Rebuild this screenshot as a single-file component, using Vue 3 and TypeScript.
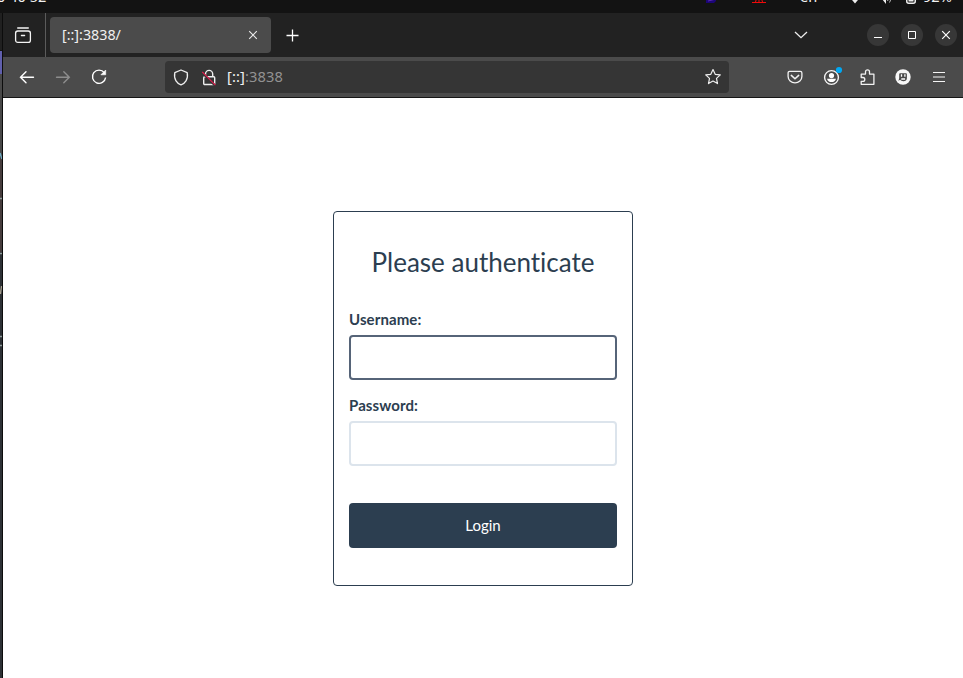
<script setup lang="ts">
import { ref } from 'vue'

const host = '[::]'
const port = ':3838'
const username = ref('')
const password = ref('')
</script>

<template>
  <div class="desktop">
    <header class="system">
      <div class="system-row">
        <span class="clock">0 40 52</span>
        <svg class="tray-app" width="12" height="32" viewBox="0 0 12 32"><path d="M1 8h10v12l-2 2H1z" fill="#1c0578" /><path d="M3 20l8-2" stroke="#5b2bb0" /></svg>
        <svg class="tray-red" width="14" height="32" viewBox="0 0 14 32" fill="none" stroke="#f00a0a"><path d="M0 21.500h14M3.500 21l1.500-5M7 15v6M10.500 21L9 16" /></svg>
        <span class="lang">en</span>
        <svg class="wifi" width="16" height="32" viewBox="0 0 16 32" fill="#eee"><path d="M0 13c4-5 12-5 16 0l-8 9.500z" /></svg>
        <svg class="volume" width="16" height="32" viewBox="0 0 16 32"><path d="M0 14h3l4-4v13l-4-5H0z" fill="#eee" /><path d="M8.500 20c1.500-2 1.500-5 0-7M10.500 21.500c2-4 2-7 0-10" stroke="#bbb" fill="none" /></svg>
        <svg class="battery" width="10" height="32" viewBox="0 0 10 32"><rect x=".75" y="9.750" width="8.500" height="12.500" rx="2" fill="none" stroke="#eee" stroke-width="1.500" /><path d="M2.500 13h5v7.500h-5z" fill="#eee" /></svg>
        <span class="charge">92%</span>
      </div>
    </header>
    <div class="workspace">
      <aside class="behind">
        <svg width="2" height="665" viewBox="0 0 2 665">
          <path d="M0 0h2v37H0z" fill="#202020" />
          <path d="M0 38h2v23H0z" fill="#605fad" />
          <path d="M0 61h2v81H0z" fill="#484848" />
          <path d="M0 142h2v97H0z" fill="#463c3c" />
          <path d="M0 239h2v426H0z" fill="#2d3135" />
          <path d="M0 140l2 6" stroke="#6ca6bc" stroke-width="1.500" />
          <path d="M0 185.500h2M0 240.500h2M0 323.500h2M0 332.500h2" stroke="#8f9c9b" stroke-width="1.500" />
          <path d="M.5 281l1-8" stroke="#a8a190" stroke-width="1.300" />
        </svg>
      </aside>
      <div class="browser">
        <div class="tabs">
          <div class="view"><svg width="18" height="18" viewBox="0 0 18 18" fill="none" stroke="#f4f4f4" stroke-width="1.300" stroke-linecap="round"><path d="M3.700 1h10.600" /><rect x="1.600" y="4" width="14.800" height="11.400" rx="2.200" /><path d="M7.400 8.500h3.200" /></svg></div>
          <div class="tab">
            <span>{{ host }}{{ port }}/</span>
            <svg width="10" height="10" viewBox="0 0 10 10" stroke="#ececec" stroke-width="1.100"><path d="M1.200 1.200l7.600 7.600M8.800 1.200L1.200 8.800" /></svg>
          </div>
          <svg class="plus" width="13" height="13" viewBox="0 0 13 13" stroke="#fff" stroke-width="1.300"><path d="M6.500.500v12M.500 6.500h12" /></svg>
          <svg class="chevron" width="14" height="8" viewBox="0 0 14 8" fill="none" stroke="#eee" stroke-width="1.300"><path d="M1 1l6 5.700L13 1" /></svg>
          <div class="window-buttons">
            <button aria-label="Minimize"><svg width="10" height="10" viewBox="0 0 10 10"><path d="M1 7.500h8" stroke="#fff" /></svg></button>
            <button aria-label="Maximize"><svg width="10" height="10" viewBox="0 0 10 10"><path d="M1.500 1.500h7v7h-7z" fill="none" stroke="#fff" /></svg></button>
            <button aria-label="Close"><svg width="10" height="10" viewBox="0 0 10 10"><path d="M1.200 1.200l7.600 7.600M8.800 1.200L1.200 8.800" stroke="#fff" stroke-width="1.200" /></svg></button>
          </div>
        </div>
        <div class="toolbar">
          <nav>
            <svg width="16" height="16" viewBox="0 0 16 16" fill="none" stroke="#fff" stroke-width="1.400" stroke-linecap="round"><path d="M14.500 8.200H1.500M7 2.700L1.500 8.200 7 13.700" /></svg>
            <svg width="16" height="16" viewBox="0 0 16 16" fill="none" stroke="#8d8d8d" stroke-width="1.400" stroke-linecap="round"><path d="M1.500 8.200h12.800M8.800 2.700l5.500 5.500-5.500 5.500" /></svg>
            <svg width="16" height="16" viewBox="0 0 16 16" fill="none" stroke="#fff" stroke-width="1.400"><path d="M13.300 3.700A6.600 6.600 0 1 0 14.600 8.500" /><path d="M14.700 1v4.800H9.900z" fill="#fff" stroke-width=".6" /></svg>
          </nav>
          <div class="address">
            <svg class="shield" width="16" height="17" viewBox="0 0 16 17" fill="none" stroke="#eee" stroke-width="1.300" stroke-linejoin="round"><path d="M8 1L14.200 3.600c.600 3.100.100 6.200-1.200 8.300-1.200 2-2.900 3.200-5 4-2.100-.8-3.800-2-5-4C1.700 9.800 1.200 6.700 1.800 3.600z" /></svg>
            <svg class="lock" width="16" height="17" viewBox="0 0 16 17" fill="none" stroke-width="1.400"><path d="M4.500 7.500V5a3.600 3.600 0 0 1 7.200 0v2.500M3.700 7.700h9a1 1 0 0 1 1 1v5.800a1 1 0 0 1-1 1h-9a1 1 0 0 1-1-1V8.700a1 1 0 0 1 1-1z" stroke="#eee" /><path d="M.7 3.300l13 13" stroke="#353535" stroke-width="2.200" /><path d="M1.200 2.800l13.200 13.300" stroke="#e21b4d" stroke-width="1.200" /></svg>
            <span class="url">{{ host }}<i>{{ port }}</i></span>
            <svg class="star" width="18" height="18" viewBox="0 0 18 18" fill="none" stroke="#eee" stroke-width="1.200" stroke-linejoin="round"><path d="M9 1.600l2.200 4.700 5.100.6-3.800 3.500 1 5.200L9 13.100l-4.500 2.500 1-5.200L1.700 6.900l5.100-.6z" /></svg>
          </div>
          <div class="actions">
            <svg width="18" height="18" viewBox="0 0 18 18" fill="none" stroke="#f2f2f2" stroke-width="1.300"><path d="M3.700 3.300h10.600c1 0 1.600.6 1.600 1.600v3.600a6.900 6.300 0 0 1-13.800 0V4.900c0-1 .6-1.600 1.600-1.600z" /><path d="M5.300 7.400L9 10.800l3.700-3.400" stroke-width="1.500" stroke-linecap="round" /></svg>
            <svg class="account" width="18" height="18" viewBox="0 0 18 18"><circle cx="9.500" cy="9.500" r="6.900" fill="none" stroke="#f5f5f5" stroke-width="1.400" /><circle cx="9.500" cy="7.600" r="2.600" fill="#fff" /><path d="M5 10.700h9c-.5 2.100-2.300 3.400-4.500 3.400S5.500 12.800 5 10.700z" fill="#fff" /><circle cx="17" cy="2" r="3.100" fill="#00a8f3" /></svg>
            <svg width="18" height="18" viewBox="0 0 18 18" fill="none" stroke="#f2f2f2" stroke-width="1.300" stroke-linejoin="round"><path d="M3.200 6.100H7.500V3.800a2 2 0 0 1 4 0v2.300h4.400v10.200H3.200v-3h1.700a1.900 1.900 0 0 0 0-3.800H3.200z" /></svg>
            <svg width="18" height="18" viewBox="0 0 18 18"><circle cx="9" cy="9" r="7.700" fill="#f8f8f8" /><path d="M6.300 5.200h5.400c.8 0 1.200.5 1.200 1.200v3.800c0 1.700-1.500 3-3.500 3-1.500 0-2.600-.6-3.200-1.400l-2 .9c1-1.300 1-2.600 1-3.700V6.400c0-.7.400-1.200 1.100-1.200z" fill="#4a4a4a" /><path d="M7.500 6.300v2.400M10.900 6.300v2.400M7.300 11h3.800" stroke="#fff" stroke-width="1.300" /></svg>
            <svg width="18" height="18" viewBox="0 0 18 18" stroke="#f5f5f5" stroke-width="1.200"><path d="M3 4.500h12M3 9h12M3 13.500h12" /></svg>
          </div>
        </div>
        <main>
          <form class="card" @submit.prevent>
            <h3>Please authenticate</h3>
            <label for="user">Username:</label>
            <input id="user" v-model="username" class="active" type="text" />
            <label for="pass">Password:</label>
            <input id="pass" v-model="password" type="password" />
            <button class="login" type="submit">Login</button>
          </form>
        </main>
      </div>
    </div>
  </div>
</template>

<style>
body { overflow: hidden; }
</style>

<style scoped>
* { box-sizing: border-box; }
svg { display: block; flex: none; overflow: visible; }
.desktop { height: 678px; display: flex; flex-direction: column; background: #131313; font-family: "Noto Sans", sans-serif; }
.system { height: 13px; flex: none; display: flex; align-items: flex-end; overflow: hidden; }
.system-row { width: 963px; height: 32px; flex: none; display: flex; align-items: center; color: #f2f2f2; font-size: 14.600px; line-height: 20px; }
.system-row span { padding-bottom: 3px; }
.clock { width: 708px; margin-left: -3px; }
.tray-red { margin-left: 35px; }
.lang { width: 18px; margin-left: 34px; }
.wifi { margin-left: 29px; }
.volume { margin-left: 16px; }
.battery { margin-left: 11px; }
.charge { margin-left: 7px; }
.workspace { flex: 1; min-height: 0; display: flex; }
.behind { width: 3px; flex: none; border-right: 1px solid #0c0c0c; overflow: hidden; }
.browser { flex: 1; min-width: 0; display: flex; flex-direction: column; }
.tabs { height: 44px; flex: none; display: flex; align-items: center; background: #222; }
.view { width: 43px; height: 44px; padding: 1px 0 0 11px; display: flex; align-items: center; border-right: 1px solid #5b5b5b; }
.tab { width: 221px; height: 36px; margin-left: 4px; padding: 0 13px 0 12px; display: flex; align-items: center; justify-content: space-between; border-radius: 4px; background: #4b4b4b; color: #f0f0f0; font-size: 14.300px; }
.tab span { padding-bottom: 2px; }
.plus { margin-left: 15px; margin-top: 1px; }
.chevron { margin-left: 495px; }
.window-buttons { margin-left: 59px; display: flex; gap: 12px; }
.window-buttons button { width: 22px; height: 22px; padding: 0; border: 0; border-radius: 50%; display: grid; place-items: center; background: #373737; }
.toolbar { height: 41px; flex: none; display: flex; align-items: center; background: #4b4b4b; border-bottom: 1px solid #161616; }
nav { width: 162px; padding-left: 16px; display: flex; gap: 20px; }
.address { width: 564px; height: 32px; padding: 0 7px 0 8px; display: flex; align-items: center; border-radius: 4px; background: #353535; color: #f3f3f3; font-size: 14.670px; }
.lock { margin-left: 12px; }
.url { margin-left: 10px; padding-bottom: 2px; flex: 1; letter-spacing: .12px; }
.url i { font-style: normal; color: #929292; }
.actions { margin-left: 57px; display: flex; gap: 18px; }
main { flex: 1; padding: 113px 0 0 330px; background: #fff; }
.card { width: 300px; height: 375px; padding: 32px 15px 0; border: 1px solid #2c3e50; border-radius: 4px; display: flex; flex-direction: column; background: #fff; color: #2c3e50; font-family: Lato, sans-serif; font-variant-ligatures: none; }
h3 { height: 36px; margin: 0 0 29px; font-size: 26px; line-height: 36px; font-weight: 400; text-align: center; }
label { height: 21px; margin-bottom: 5px; font-size: 15px; line-height: 21px; font-weight: 700; letter-spacing: .1px; }
input { width: 100%; height: 45px; margin: 0 0 15px; padding: 10px 15px; border: 2px solid #dce4ec; border-radius: 4px; outline: 0; background: #fff; }
input.active { border-color: #566478; }
.login { height: 45px; margin-top: 22px; padding: 0; border: 0; border-radius: 4px; background: #2c3e50; color: #fff; font: 15px/21px Lato, sans-serif; }
</style>
